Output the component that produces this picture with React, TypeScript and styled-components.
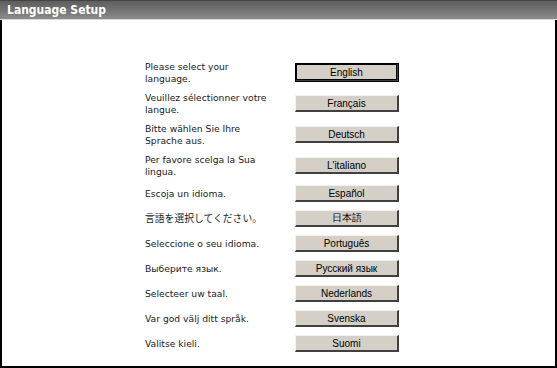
import React from "react";
import styled, { createGlobalStyle } from "styled-components";

const Global = createGlobalStyle`
  html, body { margin: 0; padding: 0; background: #fff; }
  body { width: 557px; height: 368px; overflow: hidden; }
`;

const Window = styled.div`
  width: 557px;
  height: 368px;
  display: flex;
  flex-direction: column;
  box-sizing: border-box;
  background: #fff;
`;

const TitleBar = styled.div`
  height: 20px;
  flex: 0 0 auto;
  box-sizing: border-box;
  border-top: 1px solid #444;
  border-bottom: 1px solid #d8d8d8;
  background: linear-gradient(to bottom, #5e5e5e 0%, #727272 50%, #8c8c8c 100%);
  display: flex;
  align-items: center;
  padding-left: 7px;
`;

const Title = styled.h1`
  margin: 0;
  font-family: "DejaVu Sans Condensed", "DejaVu Sans", sans-serif;
  font-stretch: condensed;
  font-weight: bold;
  font-size: 12px;
  color: #fff;
`;

const Body = styled.div`
  flex: 1 1 auto;
  box-sizing: border-box;
  border: 2px solid #000;
  border-top: none;
  padding: 37px 0 0 143px;
`;

const List = styled.div`
  display: flex;
  flex-direction: column;
`;

const Row = styled.div`
  display: grid;
  grid-template-columns: 150px 104px;
  align-items: center;
  padding: 4px 0;
`;

const Label = styled.div<{ $cjk?: boolean }>`
  font-family: ${(p) =>
    p.$cjk ? '"Noto Sans CJK JP", sans-serif' : '"DejaVu Sans", sans-serif'};
  font-size: ${(p) => (p.$cjk ? "9.8px" : "9.2px")};
  line-height: 11.5px;
  color: #1a1a1a;
  white-space: nowrap;
`;

const Line = styled.span`
  display: block;
`;

const LangButton = styled.button<{ $default?: boolean }>`
  box-sizing: border-box;
  width: 104px;
  height: ${(p) => (p.$default ? "19px" : "17px")};
  margin: 0;
  padding: 0;
  font-family: "Liberation Sans", Arial, sans-serif;
  font-size: 10px;
  color: #000;
  background: #d4d0c8;
  border-style: solid;
  border-width: 1px 2px 2px 1px;
  border-color: #f4f2ee #404040 #404040 #f4f2ee;
  outline: ${(p) => (p.$default ? "1px solid #000" : "none")};
  outline-offset: -1px;
  box-shadow: ${(p) => (p.$default ? "inset 0 0 0 1px #000" : "none")};
  cursor: pointer;
`;

const langs: { prompt: string[]; name: string; cjk?: boolean }[] = [
  { prompt: ["Please select your", "language."], name: "English" },
  { prompt: ["Veuillez sélectionner votre", "langue."], name: "Français" },
  { prompt: ["Bitte wählen Sie Ihre", "Sprache aus."], name: "Deutsch" },
  { prompt: ["Per favore scelga la Sua", "lingua."], name: "L'italiano" },
  { prompt: ["Escoja un idioma."], name: "Español" },
  { prompt: ["言語を選択してください。"], name: "日本語", cjk: true },
  { prompt: ["Seleccione o seu idioma."], name: "Português" },
  { prompt: ["Выберите язык."], name: "Русский язык" },
  { prompt: ["Selecteer uw taal."], name: "Nederlands" },
  { prompt: ["Var god välj ditt språk."], name: "Svenska" },
  { prompt: ["Valitse kieli."], name: "Suomi" },
];

export default function App() {
  return (
    <>
      <Global />
      <Window>
        <TitleBar>
          <Title>Language Setup</Title>
        </TitleBar>
        <Body>
          <List>
            {langs.map((l, i) => (
              <Row key={l.name}>
                <Label $cjk={l.cjk}>
                  {l.prompt.map((line) => (
                    <Line key={line}>{line}</Line>
                  ))}
                </Label>
                <LangButton $default={i === 0}>{l.name}</LangButton>
              </Row>
            ))}
          </List>
        </Body>
      </Window>
    </>
  );
}
